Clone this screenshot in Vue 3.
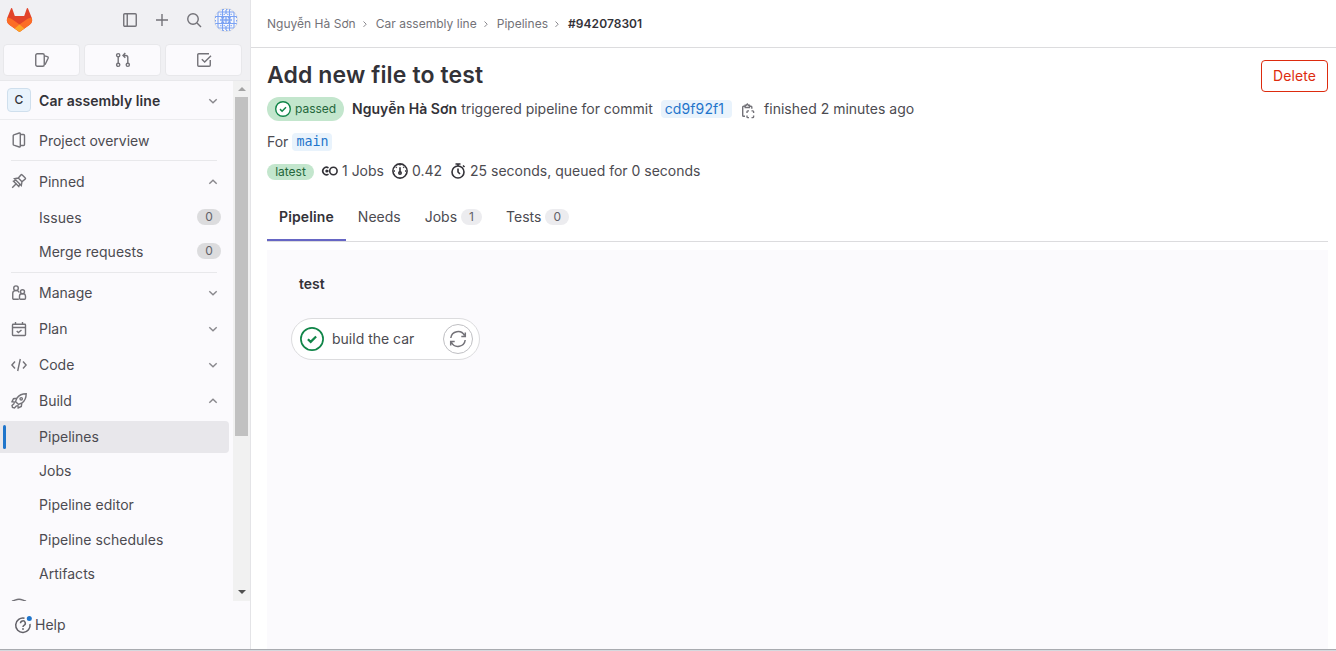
<script setup>
const pinned = [
  { label: 'Issues', count: 0 },
  { label: 'Merge requests', count: 0 },
]
const groups = [
  { label: 'Manage', icon: 'users', open: false },
  { label: 'Plan', icon: 'plan', open: false },
  { label: 'Code', icon: 'code', open: false },
  { label: 'Build', icon: 'rocket', open: true },
]
const buildItems = ['Pipelines', 'Jobs', 'Pipeline editor', 'Pipeline schedules', 'Artifacts']
const crumbs = ['Nguyễn Hà Sơn', 'Car assembly line', 'Pipelines']
const tabs = [
  { label: 'Pipeline', active: true },
  { label: 'Needs' },
  { label: 'Jobs', count: 1 },
  { label: 'Tests', count: 0 },
]
</script>

<template>
  <div class="page">
    <aside class="sidebar">
      <div class="topbar">
        <svg class="logo" viewBox="0 0 25 24">
          <path fill="#e24329" d="M24.6 9.5 21 .5a.6.6 0 0 0-1.2 0l-2.6 7.400H7.800L5.200.5A.6.6 0 0 0 4 .5L.4 9.500a6.500 6.500 0 0 0 2.200 7.500L12.500 24l9.900-7a6.500 6.500 0 0 0 2.200-7.500z" />
          <path fill="#fc6d26" d="M24.600 9.500c-2.500.5-4.600 1.500-6.500 2.900L12.500 16.600 6.900 12.400C5 11 2.900 10 .4 9.500a6.500 6.500 0 0 0 2.200 7.500L12.500 24l9.900-7a6.500 6.500 0 0 0 2.200-7.500z" />
          <path fill="#fca326" d="m7.700 20.500 4.800 3.500 4.800-3.500-4.800-3.900z" />
        </svg>
        <div class="tools">
          <svg class="ic" viewBox="0 0 16 16"><rect x="1.750" y="1.750" width="12.500" height="12.500" rx="1" /><path d="M5.250 2v12" /></svg>
          <svg class="ic" viewBox="0 0 16 16"><path d="M8 2v12M2 8h12" /></svg>
          <svg class="ic" viewBox="0 0 16 16"><circle cx="7" cy="7" r="5.250" /><path d="m11 11 4 4" /></svg>
          <svg class="avatar" viewBox="0 0 24 24">
            <defs><clipPath id="disc"><circle cx="12" cy="12" r="11.300" /></clipPath></defs>
            <circle cx="12" cy="12" r="11.500" fill="#f6f7fb" stroke="#dcdcde" />
            <g clip-path="url(#disc)" fill="none" stroke="#7ba2f3">
              <path stroke-width="1.100" d="M2 4h20M0 8.500h24M0 15.500h24M2 20h20M4 2v20M8.500 0v24M15.500 0v24M20 2v20" />
              <path stroke-width="1" stroke-dasharray="1.500 2" d="M5 1.500h14M5 22.500h14M1.500 5v14M22.500 5v14M6 6.300h12M6 17.700h12" />
              <path stroke-width="1.300" d="M6 12h12M12 2v4M12 8v8M12 18v4" />
              <path stroke-width="2.600" d="M7.200 9.200h3M13.800 9.200h3M7.200 14.800h3M13.800 14.800h3" />
            </g>
          </svg>
        </div>
      </div>
      <div class="shortcuts">
        <div class="shortcut"><svg class="ic" viewBox="0 0 16 16"><rect x="1.750" y="1.750" width="8.500" height="12.500" rx="1.500" /><path d="M10.500 3.800l2.900.9c.7.200 1 .8.700 1.500L11 12.800" /></svg></div>
        <div class="shortcut"><svg class="ic" viewBox="0 0 16 16"><circle cx="3.200" cy="3.200" r="1.600" /><circle cx="3.200" cy="12.800" r="1.600" /><circle cx="12.800" cy="12.800" r="1.600" /><path d="M3.200 5v6M12.800 11V5.500a2 2 0 0 0-2-2H8.300M10.300 1 8 3.500l2.300 2.300" /></svg></div>
        <div class="shortcut"><svg class="ic" viewBox="0 0 16 16"><path d="M13 1.750H2.750a1 1 0 0 0-1 1v10.500a1 1 0 0 0 1 1h10.500a1 1 0 0 0 1-1V8M5.800 7.200l2.900 2.900 6.300-6.300" /></svg></div>
      </div>

      <div class="scroller">
        <nav class="nav">
          <div class="project">
            <span class="letter">C</span>
            <span class="project-name">Car assembly line</span>
            <svg class="chev" viewBox="0 0 12 12"><path d="m2.300 4.200 3.700 3.600 3.700-3.600" /></svg>
          </div>
          <div class="row overview">
            <svg class="ic" viewBox="0 0 16 16"><path d="M8.300 1 2.800 2.800a1 1 0 0 0-.6 1v8.400a1 1 0 0 0 .6 1L8.300 15a.8.800 0 0 0 1-.8V1.800a.8.800 0 0 0-1-.8zM9.500 2.500h3a1 1 0 0 1 1 1v9a1 1 0 0 1-1 1h-3" /></svg>
            <span>Project overview</span>
          </div>
          <div class="rule"></div>
          <div class="row">
            <svg class="ic pin" viewBox="0 0 16 16"><path d="M1.200 14.800l4.500-4.500M11 1.700l3.300 3.300a.6.600 0 0 1 0 .9L11 8.700l-.7 3.800-6.800-6.800 3.800-.7L10.100 1.700a.6.600 0 0 1 .9 0zM7.300 5l3.700 3.700M5 7.200l-2.500 1 5.300 5.300 1-2.500" /></svg>
            <span>Pinned</span>
            <svg class="chev" viewBox="0 0 12 12"><path d="m2.300 7.800 3.700-3.600 3.700 3.600" /></svg>
          </div>
          <div v-for="(p, i) in pinned" :key="p.label" class="row child" :class="{ spaced: i === 0 }">
            <span>{{ p.label }}</span><span class="count">{{ p.count }}</span>
          </div>
          <div class="rule low"></div>
          <div v-for="g in groups" :key="g.label" class="row">
            <svg v-if="g.icon === 'users'" class="ic" viewBox="0 0 16 16"><circle cx="5" cy="3.200" r="2.300" /><path d="M7.800 14.250H2.750a1 1 0 0 1-1-1V8.300A2.800 2.800 0 0 1 4 5.600h2a2.800 2.800 0 0 1 2.200 1.900" /><circle cx="11.500" cy="6.700" r="2" /><path d="M8.500 13.250V11A2.300 2.300 0 0 1 10.700 8.800h1.700a2.300 2.300 0 0 1 2.100 2.200v2.250a1 1 0 0 1-1 1h-4a1 1 0 0 1-1-1z" /></svg>
            <svg v-else-if="g.icon === 'plan'" class="ic" viewBox="0 0 16 16"><rect x="1.500" y="3.200" width="13" height="11.300" rx=".7" /><path d="M1.500 6.500h13M4.500 1v2M11.500 1v2M5.700 10l1.700 1.600L10.500 9" /></svg>
            <svg v-else-if="g.icon === 'code'" class="ic" viewBox="0 0 16 16"><path d="M4 4.500.9 8 4 11.500M12 4.500 15.100 8 12 11.500M9.300 2 6.700 14" /></svg>
            <svg v-else class="ic" viewBox="0 0 16 16"><path d="M15.200.8c-4 0-7 1.200-9.200 4.200L4.500 8.500l3 3L11 10c3-2.200 4.200-5.200 4.200-9.200zM5.700 5.200 2.500 5.700 1 8.800l3.200.4M10.800 10.300l-.5 3.200L7.200 15l-.4-3.200M3.500 10.200 1 12.500l.5 2 2 .5 2.300-2.500" /><circle cx="10.200" cy="5.800" r="1.200" /></svg>
            <span>{{ g.label }}</span>
            <svg class="chev" viewBox="0 0 12 12"><path :d="g.open ? 'm2.300 7.800 3.700-3.600 3.700 3.600' : 'm2.300 4.200 3.700 3.600 3.700-3.600'" /></svg>
          </div>
          <div v-for="(b, i) in buildItems" :key="b" class="row child" :class="{ current: i === 0, spaced: i === 3 }">
            <span>{{ b }}</span>
          </div>
          <div class="row next">
            <svg class="ic" viewBox="0 0 16 16"><path d="M1.500 3C4 2.500 5 1.200 8 1.200S12 2.500 14.500 3v5c0 3-3 5.500-6.500 6.500C4.500 13.500 1.500 11 1.500 8z" /></svg>
          </div>
        </nav>
        <div class="track">
          <svg class="arrow" viewBox="0 0 8 4"><path fill="#a3a3a3" d="M0 4 4 0l4 4z" /></svg>
          <div class="thumb"></div>
          <svg class="arrow" viewBox="0 0 8 4"><path fill="#505050" d="m0 0 4 4 4-4z" /></svg>
        </div>
      </div>

      <div class="help">
        <svg class="help-ic" viewBox="0 0 18 18"><path d="M10.500 2.200A7.200 7.200 0 1 0 16 8" /><path d="M6.500 7.300a2.400 2.400 0 1 1 3.500 2.100c-.7.400-1 .7-1 1.500" /><circle class="dot" cx="9" cy="13" r=".9" /><circle class="note" cx="15.300" cy="2.500" r="2.500" /></svg>
        <span>Help</span>
      </div>
    </aside>

    <main class="main">
      <header class="crumbs">
        <template v-for="c in crumbs" :key="c">
          <span class="crumb">{{ c }}</span>
          <svg class="sep" viewBox="0 0 8 8"><path d="m2.500 1.500 2.700 2.700-2.700 2.700" /></svg>
        </template>
        <span class="here">#942078301</span>
      </header>

      <section class="content">
        <div class="heading">
          <h1>Add new file to test</h1>
          <button class="delete">Delete</button>
        </div>
        <div class="line meta">
          <span class="passed">
            <svg viewBox="0 0 16 16"><circle cx="8" cy="8" r="7.300" fill="#fff" stroke="#108548" stroke-width="1.400" /><path d="m5 8.100 2.100 2.100L11 6.300" fill="none" stroke="#108548" stroke-width="1.500" /></svg>
            <span>passed</span>
          </span>
          <b class="user">Nguyễn Hà Sơn</b>
          <span class="trig">triggered pipeline for commit</span>
          <span class="sha">cd9f92f1</span>
          <svg class="ic copy" viewBox="0 0 16 16"><path d="M5 13.250H3.500a.8.800 0 0 1-.8-.8V4a.8.800 0 0 1 .8-.8H5M9.500 3.200H11a.8.800 0 0 1 .8.800v1.700" /><path d="M5.200 4.500V2.300h1L7.300 1l1.100 1.300h1v2.200z" /><path d="M7 10V8.700a.8.800 0 0 1 .8-.8H9M11.500 7.900h1.300a.8.800 0 0 1 .8.800V10M13.600 12.500v1.300a.8.800 0 0 1-.8.800h-1.300M9 14.600H7.800a.8.800 0 0 1-.8-.8v-1.300" /></svg>
          <span class="finished">finished 2 minutes ago</span>
        </div>
        <div class="line for"><span>For</span><code>main</code></div>
        <div class="line stats">
          <span class="latest">latest</span>
          <svg class="dark pipe" viewBox="0 0 16 16"><circle cx="11.400" cy="8" r="3.700" /><path d="M6.500 4.900A3.700 3.700 0 1 0 6.500 11.100M4.500 8h2" /><circle cx="4.800" cy="8" r=".7" /></svg>
          <span class="jobs">1 Jobs</span>
          <svg class="dark gauge" viewBox="0 0 16 16"><circle cx="8" cy="8" r="7.100" /><path d="M8 4.200v5M8 1v1.500M2 8h1M13 8h1M4 4l.7.700M12 4l-.7.700" /><circle cx="8" cy="10" r="1.200" /></svg>
          <span class="ratio">0.42</span>
          <svg class="dark timer" viewBox="0 0 16 16"><circle cx="8" cy="9" r="6" /><path d="M8 5.500V9l2 2M5.500 1h5M8 1v2M13 2.500 14.500 4" /></svg>
          <span class="time">25 seconds, queued for 0 seconds</span>
        </div>

        <div class="tabs">
          <div v-for="t in tabs" :key="t.label" class="tab" :class="{ active: t.active }">
            <span>{{ t.label }}</span><span v-if="t.count !== undefined" class="badge">{{ t.count }}</span>
          </div>
        </div>

        <div class="graph">
          <h2>test</h2>
          <div class="job">
            <svg class="ok" viewBox="0 0 24 24"><circle cx="12" cy="12" r="11.100" fill="#fff" stroke="#108548" stroke-width="1.700" /><path d="m7.900 12.200 2.800 2.700 5.400-5.400" fill="none" stroke="#108548" stroke-width="2.200" /></svg>
            <span class="job-name">build the car</span>
            <span class="retry"><svg viewBox="0 0 18 18"><path d="M1.800 8A7.300 7.300 0 0 1 15.500 5.500M16.200 10A7.300 7.300 0 0 1 2.500 12.500M16.300 2.500v4h-4M1.700 15.500v-4h4" /></svg></span>
          </div>
        </div>
      </section>
    </main>
    <div class="edge"></div>
  </div>
</template>

<style>
html, body { margin: 0; overflow: hidden; background: #fff; }
</style>

<style scoped>
* { box-sizing: border-box; }
.page { height: 651px; display: grid; grid-template-columns: 251px 1fr; grid-template-rows: 649px 2px; font: 14px/20px Inter, "Noto Sans", sans-serif; color: #4c4b51; overflow: hidden; }
svg { display: block; flex: none; overflow: visible; }
span, b { white-space: nowrap; }
.ic { width: 16px; height: 16px; fill: none; stroke: #737278; stroke-width: 1.4; }
.chev { width: 12px; height: 12px; fill: none; stroke: #89888d; stroke-width: 1.4; margin-left: auto; }
.edge { grid-column: 1 / -1; background: #d5d9de; border-top: 1px solid #a9abb0; }

.sidebar { background: #fbfafd; border-right: 1px solid #e4e4e7; display: flex; flex-direction: column; height: 649px; }
.topbar { height: 44px; background: #f0f0f3; display: flex; justify-content: space-between; padding: 8px 12px 0 7px; flex: none; }
.logo { width: 25px; height: 24px; }
.tools { display: flex; gap: 16px; align-items: center; height: 24px; }
.avatar { width: 24px; height: 24px; margin-left: -4px; }
.shortcuts { height: 36px; background: #f0f0f3; display: flex; gap: 4px; padding: 0 0 4px 3px; flex: none; }
.shortcut { width: 77px; height: 32px; display: grid; place-items: center; background: #fbfafd; border: 1px solid #e8e8eb; border-radius: 4px; }
.scroller { height: 521px; flex: none; display: flex; border-top: 1px solid #e8e8eb; overflow: hidden; }
.nav { width: 233px; height: 520px; overflow: hidden; }
.project { height: 39px; border-bottom: 1px solid #ececef; display: flex; align-items: center; padding: 2px 14px 0 7px; }
.letter { width: 24px; height: 24px; border: 1px solid #cfdfed; border-radius: 4px; background: #e9f3fc; font-size: 12px; font-weight: 500; color: #333238; display: grid; place-items: center; margin: -3px 8px 0 0; }
.project-name { font-weight: 600; color: #333238; letter-spacing: .06px; }
.row { height: 36px; display: flex; align-items: center; padding: 0 14px 0 11px; }
.row .ic { margin-right: 12px; }
.pin { position: relative; top: -1px; }
.overview { height: 32px; margin-top: 5px; }
.overview .ic { margin-top: -2px; }
.rule { height: 1px; background: #e8e8eb; margin: 3px 16px 3px 11px; }
.row.child { height: 34px; padding: 0 12px 0 39px; justify-content: space-between; letter-spacing: .03px; }
.low { margin: 3px 16px 2px 11px; }
.count { width: 24px; height: 16px; border-radius: 8px; background: #dcdcde; color: #626168; font-size: 12px; line-height: 16px; text-align: center; margin-top: -2px; }
.row.child.current { height: 32px; margin: 2px 4px 1px 0; background: #e8e7eb; border-radius: 0 4px 4px 0; padding-left: 0; justify-content: flex-start; }
.current::before { content: ""; width: 3px; height: 24px; border-radius: 2px; background: #1f75cb; margin: 0 33px 0 3px; }
.spaced { margin-top: 1px; }
.next { margin-top: 7px; align-items: flex-start; }
.track { width: 17px; background: #f1f1f1; display: flex; flex-direction: column; align-items: center; padding: 6px 0 7px; }
.arrow { width: 8px; height: 4px; }
.thumb { width: 13px; height: 339px; background: #c1c1c1; margin: 6px 0 auto; }
.help { height: 48px; display: flex; align-items: center; gap: 3px; padding-left: 14px; }
.help-ic { width: 18px; height: 18px; fill: none; stroke: #626168; stroke-width: 1.5; }
.help-ic .dot { fill: #626168; stroke: none; }
.help-ic .note { fill: #1f75cb; stroke: none; }

.main { min-width: 0; height: 649px; overflow: hidden; }
.crumbs { height: 48px; border-bottom: 1px solid #dcdcde; display: flex; align-items: center; padding-left: 16px; font-size: 12px; color: #737278; letter-spacing: .02px; }
.sep { width: 8px; height: 8px; fill: none; stroke: #89888d; stroke-width: 1; margin: 0 7px 0 5px; }
.here { color: #333238; font-weight: 600; letter-spacing: .06px; }
.content { padding: 0 8px 0 16px; }
.heading { display: flex; justify-content: space-between; height: 48px; padding-top: 12px; }
h1 { margin: 0; font-size: 23px; line-height: 30px; font-weight: 600; color: #333238; white-space: nowrap; letter-spacing: .12px; }
.delete { width: 67px; height: 32px; font: inherit; letter-spacing: .1px; color: #dd2b0e; background: #fff; border: 1px solid #dd2b0e; border-radius: 4px; padding: 0; }
.line { display: flex; align-items: center; }
.meta { height: 26px; }
.passed { display: flex; align-items: center; width: 77px; height: 24px; background: #c3e6cd; color: #24663b; border-radius: 12px; padding-left: 8px; gap: 4px; font-size: 12px; }
.passed svg { width: 16px; height: 16px; }
.user { font-weight: 600; color: #333238; margin-left: 8px; letter-spacing: .05px; }
.trig { margin-left: 4px; }
.sha { background: #e9f3fc; color: #1f75cb; border-radius: 4px; height: 18px; line-height: 18px; padding: 0 8px 0 4px; margin-left: 8px; letter-spacing: .1px; }
.copy { margin: 3px 8px 0 8px; }
.for { height: 38px; gap: 4px; padding-top: 1px; }
code { font: 13.3px/18px "DejaVu Sans Mono", monospace; color: #1f75cb; background: #e9f3fc; border-radius: 4px; padding: 0 4px; }
.stats { height: 22px; }
.latest { width: 47px; height: 16px; border-radius: 8px; background: #c3e6cd; color: #24663b; font-size: 12px; line-height: 16px; text-align: center; margin: 1px 8px 0 0; }
.dark { width: 16px; height: 16px; fill: none; stroke: #333238; stroke-width: 1.6; }
.jobs { margin: 0 8px 0 4px; }
.ratio { margin: 0 8px 0 4px; }
.time { margin-left: 4px; }
.tabs { height: 60px; border-bottom: 1px solid #dcdcde; display: flex; align-items: flex-end; }
.tab { height: 48px; padding: 0 12px; display: flex; align-items: center; gap: 4px; }
.active { color: #333238; font-weight: 600; box-shadow: inset 0 -2px 0 #6666c4; letter-spacing: .12px; }
.badge { min-width: 21px; height: 16px; border-radius: 8px; background: #ececef; color: #626168; font-size: 12px; line-height: 16px; text-align: center; padding: 0 8px; }
.graph { height: 407px; margin-top: 8px; background: #fbfafd; padding: 24px; }
h2 { margin: 0 0 24px 8px; font-size: 14px; line-height: 20px; font-weight: 600; color: #333238; }
.job { width: 189px; height: 42px; border: 1px solid #dcdcde; border-radius: 21px; background: #fff; display: flex; align-items: center; padding: 0 6px 0 8px; }
.ok { width: 24px; height: 24px; margin-right: 8px; }
.retry { width: 30px; height: 30px; border: 1px solid #bfbfc3; border-radius: 50%; display: grid; place-items: center; margin-left: auto; }
.retry svg { width: 18px; height: 18px; fill: none; stroke: #737278; stroke-width: 1.5; }
</style>
